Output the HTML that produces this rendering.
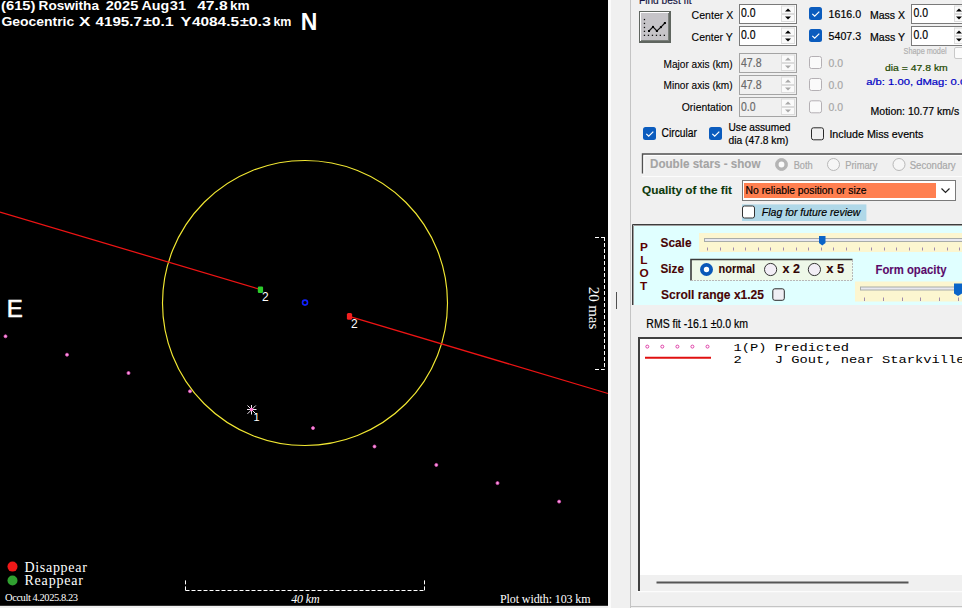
<!DOCTYPE html>
<html><head><meta charset="utf-8">
<style>
html,body{margin:0;padding:0;width:962px;height:608px;overflow:hidden;background:#f0f0f0;}
svg{display:block;position:absolute;left:0;top:0;}
text{font-family:"Liberation Sans",sans-serif;}
.sf{font-family:"Liberation Serif",serif;}
.mono{font-family:"Liberation Mono",monospace;}
</style></head>
<body>
<svg width="962" height="608" viewBox="0 0 962 608">
<!-- right panel background -->
<rect x="0" y="0" width="962" height="608" fill="#f0f0f0"/>
<!-- ================= BLACK PLOT PANEL ================= -->
<rect x="0" y="0" width="608" height="605.8" fill="#000"/>
<!-- header text -->
<g font-size="13" font-weight="bold" fill="#fff">
<text x="1.0" y="9.9" textLength="34.5" lengthAdjust="spacingAndGlyphs">(615)</text>
<text x="38.6" y="9.9" textLength="60.4" lengthAdjust="spacingAndGlyphs">Roswitha</text>
<text x="105.7" y="9.9" textLength="32.6" lengthAdjust="spacingAndGlyphs">2025</text>
<text x="141.5" y="9.9" textLength="27.7" lengthAdjust="spacingAndGlyphs">Aug</text>
<text x="169.8" y="9.9" textLength="16.2" lengthAdjust="spacingAndGlyphs">31</text>
<text x="197.20000000000002" y="9.9" textLength="30.4" lengthAdjust="spacingAndGlyphs">47.8</text>
<text x="229.9" y="9.9" textLength="19.7" lengthAdjust="spacingAndGlyphs">km</text>
<text x="1.4" y="25.7" textLength="72.8" lengthAdjust="spacingAndGlyphs">Geocentric</text>
<text x="79.10000000000001" y="25.7" textLength="11.4" lengthAdjust="spacingAndGlyphs">X</text>
<text x="95.60000000000001" y="25.7" textLength="46.2" lengthAdjust="spacingAndGlyphs">4195.7</text>
<text x="143.3" y="25.7" textLength="30.3" lengthAdjust="spacingAndGlyphs">±0.1</text>
<text x="180.4" y="25.7" textLength="10.9" lengthAdjust="spacingAndGlyphs">Y</text>
<text x="191.9" y="25.7" textLength="47.1" lengthAdjust="spacingAndGlyphs">4084.5</text>
<text x="239.9" y="25.7" textLength="31.0" lengthAdjust="spacingAndGlyphs">±0.3</text>
<text x="273.4" y="25.7" textLength="18.0" lengthAdjust="spacingAndGlyphs">km</text>
</g>
<text x="300.7" y="29.7" font-size="23" font-weight="bold" fill="#fff">N</text>
<text x="6.8" y="317.1" font-size="24" fill="#fff" stroke="#fff" stroke-width="0.6">E</text>

<!-- circle -->
<circle cx="305" cy="303" r="142.5" fill="none" stroke="#f2e832" stroke-width="1.15"/>
<!-- chord lines -->
<line x1="0" y1="212" x2="260.5" y2="289.5" stroke="#ee1414" stroke-width="1.25"/>
<line x1="349.2" y1="316.3" x2="608" y2="393.5" stroke="#ee1414" stroke-width="1.25"/>
<!-- markers -->
<rect x="257.8" y="286.6" width="5.3" height="6.4" rx="1.2" fill="#2ccc2c"/>
<rect x="346.9" y="313" width="5.2" height="6.8" rx="1.5" fill="#f22020"/>
<circle cx="305" cy="302.6" r="2.5" fill="none" stroke="#1020ff" stroke-width="1.6"/>
<text x="262" y="301" font-size="12" fill="#fff">2</text>
<text x="351" y="328" font-size="12" fill="#fff">2</text>
<!-- predicted track dots -->
<g fill="#f8a0e0" stroke="#e850c0" stroke-width="0.8">
<circle cx="5.5" cy="336.3" r="1.5"/>
<circle cx="67" cy="354.7" r="1.5"/>
<circle cx="128.5" cy="373" r="1.5"/>
<circle cx="190" cy="391.3" r="1.5"/>
<circle cx="313" cy="428.1" r="1.5"/>
<circle cx="374.5" cy="446.5" r="1.5"/>
<circle cx="436.3" cy="464.9" r="1.5"/>
<circle cx="497.5" cy="483.1" r="1.5"/>
<circle cx="559.1" cy="501.6" r="1.5"/>
</g>
<!-- star -->
<g stroke="#f4eaf4" stroke-width="1">
<line x1="247" y1="409.5" x2="256.5" y2="409.5"/>
<line x1="251.5" y1="405" x2="251.5" y2="414.5"/>
<line x1="247.5" y1="405.5" x2="255.8" y2="413.8"/>
<line x1="255.8" y1="405.5" x2="247.5" y2="413.8"/>
</g>
<circle cx="251.5" cy="409.5" r="1.7" fill="#ff70d0"/>
<text x="253.5" y="420.6" font-size="11" fill="#fff">1</text>

<!-- vertical scale bracket -->
<g stroke="#fff" stroke-width="1" fill="none" stroke-dasharray="4,2">
<line x1="604.5" y1="237" x2="604.5" y2="369.5"/>
<line x1="595" y1="237.5" x2="604.5" y2="237.5"/>
<line x1="595" y1="369.5" x2="604.5" y2="369.5"/>
</g>
<text class="sf" transform="translate(588.6,286.8) rotate(90)" font-size="15" fill="#fff" textLength="42.5" lengthAdjust="spacing">20 mas</text>

<!-- horizontal scale bracket -->
<g stroke="#fff" stroke-width="1" fill="none" stroke-dasharray="4,2">
<line x1="185.5" y1="590.5" x2="424.5" y2="590.5"/>
<line x1="185.5" y1="580.4" x2="185.5" y2="590.5"/>
<line x1="424.5" y1="580.4" x2="424.5" y2="590.5"/>
</g>
<text class="sf" x="291.2" y="603.1" font-size="12" font-style="italic" fill="#fff" textLength="28.4" lengthAdjust="spacing">40 km</text>

<!-- legend -->
<circle cx="12.5" cy="566.6" r="5" fill="#f01818"/>
<circle cx="12.5" cy="580.5" r="5" fill="#30a030"/>
<text class="sf" x="24.4" y="571.6" font-size="14" fill="#fff" textLength="62.4" lengthAdjust="spacing">Disappear</text>
<text class="sf" x="24.4" y="585.4" font-size="14" fill="#fff" textLength="58.6" lengthAdjust="spacing">Reappear</text>
<text class="sf" x="5" y="601.4" font-size="10.5" fill="#fff" textLength="73" lengthAdjust="spacing">Occult 4.2025.8.23</text>
<text class="sf" x="500" y="603" font-size="12" fill="#fff" textLength="90.6" lengthAdjust="spacing">Plot width: 103 km</text>


<!-- ================= RIGHT PANEL ================= -->
<rect x="608" y="0" width="3" height="608" fill="#fbfbfb"/>
<line x1="630.5" y1="0" x2="630.5" y2="608" stroke="#c4c4c4" stroke-width="1"/>
<text x="639" y="4" font-size="11.5" fill="#121238" textLength="52.5" lengthAdjust="spacingAndGlyphs" stroke="#1a1a50" stroke-width="0.2">Find best fit</text>
<!-- find best fit button -->
<rect x="639" y="11" width="32" height="32" fill="#5f655f"/>
<rect x="640" y="12" width="29" height="29" fill="#fdfdfd"/>
<rect x="641" y="13" width="28" height="28" fill="#7a7f7a"/>
<rect x="641" y="13" width="27" height="27" fill="#c6c4c8"/>
<g fill="#111">
<rect x="643.8" y="18.9" width="1.3" height="1.3"/><rect x="643.8" y="22.8" width="1.3" height="1.3"/><rect x="643.8" y="26.8" width="1.3" height="1.3"/><rect x="643.8" y="30.7" width="1.3" height="1.3"/><rect x="643.8" y="34.7" width="1.3" height="1.3"/>
<rect x="647.8" y="34.7" width="1.3" height="1.3"/><rect x="651.8" y="34.7" width="1.3" height="1.3"/><rect x="655.8" y="34.7" width="1.3" height="1.3"/><rect x="659.7" y="34.7" width="1.3" height="1.3"/><rect x="663.7" y="34.7" width="1.3" height="1.3"/>
</g>
<polyline points="649,31 653,26.9 656.9,31 660.9,27.1 664.9,23" fill="none" stroke="#111" stroke-width="1.2"/>
<g fill="#000"><rect x="648" y="30" width="2" height="2"/><rect x="652" y="25.9" width="2" height="2"/><rect x="655.9" y="30" width="2" height="2"/><rect x="659.9" y="26.1" width="2" height="2"/><rect x="663.9" y="22" width="2" height="2"/></g>

<!-- labels -->
<g font-size="11.4" fill="#000" stroke="#000" stroke-width="0.12">
<text x="691.6" y="18.7" textLength="41.7" lengthAdjust="spacingAndGlyphs">Center X</text>
<text x="691.6" y="40.7" textLength="41.2" lengthAdjust="spacingAndGlyphs">Center Y</text>
<text x="663.5" y="67.5" textLength="69.1" lengthAdjust="spacingAndGlyphs">Major axis (km)</text>
<text x="663.5" y="89.3" textLength="69.1" lengthAdjust="spacingAndGlyphs">Minor axis (km)</text>
<text x="681.8" y="110.7" textLength="50.8" lengthAdjust="spacingAndGlyphs">Orientation</text>
</g>
<!-- inputs -->
<g>
<rect x="739.5" y="4.5" width="57" height="19" fill="#fff" stroke="#7a7a7a"/>
<rect x="739.5" y="26.5" width="57" height="19" fill="#fff" stroke="#7a7a7a"/>
<rect x="739.5" y="53.5" width="57" height="19" fill="none" stroke="#a4a4a4"/>
<rect x="739.5" y="75.5" width="57" height="19" fill="none" stroke="#a4a4a4"/>
<rect x="739.5" y="97.5" width="57" height="19" fill="none" stroke="#a4a4a4"/>
</g>
<g fill="#fafafa" stroke="#dcdcdc">
<rect x="781.5" y="6" width="13" height="7.5"/><rect x="781.5" y="14.5" width="13" height="7"/>
<rect x="781.5" y="28" width="13" height="7.5"/><rect x="781.5" y="36.5" width="13" height="7"/>
<rect x="781.5" y="55" width="13" height="7.5"/><rect x="781.5" y="63.5" width="13" height="7"/>
<rect x="781.5" y="77" width="13" height="7.5"/><rect x="781.5" y="85.5" width="13" height="7"/>
<rect x="781.5" y="99" width="13" height="7.5"/><rect x="781.5" y="107.5" width="13" height="7"/>
</g>
<g fill="#000">
<path d="M785 11.5h6l-3-3z"/><path d="M785 16.5h6l-3 3z"/>
<path d="M785 33.5h6l-3-3z"/><path d="M785 38.5h6l-3 3z"/>
</g>
<g fill="#a8a8a8">
<path d="M785 60.5h6l-3-3z"/><path d="M785 65.5h6l-3 3z"/>
<path d="M785 82.5h6l-3-3z"/><path d="M785 87.5h6l-3 3z"/>
<path d="M785 104.5h6l-3-3z"/><path d="M785 109.5h6l-3 3z"/>
</g>
<g font-size="12">
<text x="741" y="16.8" fill="#000" textLength="14.5" lengthAdjust="spacingAndGlyphs" stroke="#000" stroke-width="0.2">0.0</text>
<text x="741" y="38.8" fill="#000" textLength="14.5" lengthAdjust="spacingAndGlyphs" stroke="#000" stroke-width="0.2">0.0</text>
<text x="741" y="66.5" fill="#6a6a6a" textLength="20.5" lengthAdjust="spacingAndGlyphs" stroke="#6a6a6a" stroke-width="0.2">47.8</text>
<text x="741" y="88.5" fill="#6a6a6a" textLength="20.5" lengthAdjust="spacingAndGlyphs" stroke="#6a6a6a" stroke-width="0.2">47.8</text>
<text x="741" y="110.5" fill="#6a6a6a" textLength="14.5" lengthAdjust="spacingAndGlyphs" stroke="#6a6a6a" stroke-width="0.2">0.0</text>
</g>
<!-- checked checkboxes -->
<g fill="#0b5cbe">
<rect x="809" y="7" width="13" height="13" rx="2.5"/>
<rect x="809" y="29" width="13" height="13" rx="2.5"/>
<rect x="643" y="127" width="13" height="13" rx="2.5"/>
<rect x="709" y="127" width="13" height="13" rx="2.5"/>
</g>
<g fill="none" stroke="#fff" stroke-width="1.2">
<path d="M812.3 13.8l2.4 2.4 4.6-4.6"/>
<path d="M812.3 35.8l2.4 2.4 4.6-4.6"/>
<path d="M646.3 133.8l2.4 2.4 4.6-4.6"/>
<path d="M712.3 133.8l2.4 2.4 4.6-4.6"/>
</g>
<!-- disabled checkboxes -->
<g fill="#fafafa" stroke="#b4b0b4">
<rect x="809.5" y="56.5" width="12" height="12" rx="2"/>
<rect x="809.5" y="78.5" width="12" height="12" rx="2"/>
<rect x="809.5" y="100.8" width="12" height="12" rx="2"/>
</g>
<g font-size="11.5">
<text x="828.6" y="17.8" fill="#000" textLength="32.5" lengthAdjust="spacingAndGlyphs" stroke="#000" stroke-width="0.2">1616.0</text>
<text x="828.6" y="39.5" fill="#000" textLength="32.5" lengthAdjust="spacingAndGlyphs" stroke="#000" stroke-width="0.2">5407.3</text>
<text x="828.5" y="66.8" fill="#a8a8a8" textLength="14.5" lengthAdjust="spacingAndGlyphs" stroke="#a0a0a0" stroke-width="0.2">0.0</text>
<text x="828.5" y="88.8" fill="#a8a8a8" textLength="14.5" lengthAdjust="spacingAndGlyphs" stroke="#a0a0a0" stroke-width="0.2">0.0</text>
<text x="828.5" y="111" fill="#a8a8a8" textLength="14.5" lengthAdjust="spacingAndGlyphs" stroke="#a0a0a0" stroke-width="0.2">0.0</text>
</g>
<g font-size="10.5" fill="#000" stroke="#000" stroke-width="0.2">
<text x="870" y="18.6" textLength="35" lengthAdjust="spacingAndGlyphs">Mass X</text>
<text x="870" y="40.7" textLength="35" lengthAdjust="spacingAndGlyphs">Mass Y</text>
</g>
<rect x="911.5" y="4.5" width="60" height="19" fill="#fff" stroke="#7a7a7a"/>
<rect x="911.5" y="26.5" width="60" height="19" fill="#fff" stroke="#7a7a7a"/>
<text x="913.5" y="16.8" font-size="12" fill="#000" textLength="14.5" lengthAdjust="spacingAndGlyphs" stroke="#000" stroke-width="0.2">0.0</text>
<text x="913.5" y="39.3" font-size="12" fill="#000" textLength="14.5" lengthAdjust="spacingAndGlyphs" stroke="#000" stroke-width="0.2">0.0</text>
<g fill="#fafafa" stroke="#dcdcdc">
<rect x="954.5" y="6" width="13" height="7.5"/><rect x="954.5" y="14.5" width="13" height="7"/>
<rect x="954.5" y="28" width="13" height="7.5"/><rect x="954.5" y="36.5" width="13" height="7"/>
</g>
<g fill="#000"><path d="M956 11.5h6l-3-3z"/><path d="M956 16.5h6l-3 3z"/><path d="M956 33.5h6l-3-3z"/><path d="M956 38.5h6l-3 3z"/></g>
<text x="903.6" y="54" font-size="9" fill="#b0b0b0" textLength="43" lengthAdjust="spacingAndGlyphs" stroke="#b0b0b0" stroke-width="0.2">Shape model</text>
<rect x="954.5" y="47.5" width="12" height="11" rx="1.5" fill="#fbfbfb" stroke="#c8c8c8"/>
<text x="885" y="70.7" font-size="9.8" fill="#1c4800" textLength="62.8" lengthAdjust="spacingAndGlyphs" stroke="#1c4800" stroke-width="0.2">dia = 47.8 km</text>
<text x="866.2" y="84.5" font-size="9.8" fill="#0000c4" textLength="100" lengthAdjust="spacingAndGlyphs" stroke="#0000c4" stroke-width="0.2">a/b: 1.00, dMag: 0.0</text>
<text x="870.6" y="114.7" font-size="10.6" fill="#000" textLength="88.6" lengthAdjust="spacingAndGlyphs" stroke="#000" stroke-width="0.2">Motion: 10.77 km/s</text>

<!-- checkbox row -->
<text x="661.6" y="137.3" font-size="12" fill="#000" textLength="35.4" lengthAdjust="spacingAndGlyphs" stroke="#000" stroke-width="0.2">Circular</text>
<text x="728.5" y="130.6" font-size="11" fill="#000" textLength="62" lengthAdjust="spacingAndGlyphs" stroke="#000" stroke-width="0.2">Use assumed</text>
<text x="728.5" y="143.8" font-size="11" fill="#000" textLength="60" lengthAdjust="spacingAndGlyphs" stroke="#000" stroke-width="0.2">dia (47.8 km)</text>
<rect x="811.5" y="127.8" width="12" height="12" rx="2" fill="none" stroke="#2a2a2a"/>
<text x="829.4" y="137.8" font-size="11.8" fill="#000" textLength="94" lengthAdjust="spacingAndGlyphs" stroke="#000" stroke-width="0.2">Include Miss events</text>


<!-- double stars group -->
<path d="M642.5 173.5V154H962" fill="none" stroke="#505050" stroke-width="1.4"/>
<path d="M644 173.5V155.5H962" fill="none" stroke="#fff" stroke-width="1"/>
<line x1="642" y1="176.5" x2="962" y2="176.5" stroke="#fcfcfc" stroke-width="1"/>
<text x="650" y="168.2" font-size="12" font-weight="bold" fill="#a4a4a4" textLength="110.5" lengthAdjust="spacingAndGlyphs" stroke="#a4a4a4" stroke-width="0.1">Double stars - show</text>
<g fill="#f6f6f6" stroke="#b8b8b8">
<circle cx="781.5" cy="164.5" r="6"/>
<circle cx="833.5" cy="164.5" r="6"/>
<circle cx="899" cy="164.5" r="6"/>
</g>
<circle cx="781.5" cy="164.5" r="4.4" fill="#fafafa" stroke="#b4b4b4" stroke-width="3"/>
<g font-size="11" fill="#a8a8a8" stroke="#a8a8a8" stroke-width="0.2">
<text x="793.7" y="169" textLength="19" lengthAdjust="spacingAndGlyphs">Both</text>
<text x="845.3" y="169" textLength="32" lengthAdjust="spacingAndGlyphs">Primary</text>
<text x="909.7" y="169" textLength="46" lengthAdjust="spacingAndGlyphs">Secondary</text>
</g>
<!-- quality -->
<text x="642" y="194.4" font-size="11.2" font-weight="bold" fill="#0c3a0c" textLength="90" lengthAdjust="spacingAndGlyphs" stroke="#0c3a0c" stroke-width="0.1">Quality of the fit</text>
<rect x="742.5" y="180.5" width="213" height="20" fill="#fff" stroke="#7a7a7a"/>
<rect x="744" y="183" width="192" height="15" fill="#ff7f50"/>
<text x="745.6" y="194.4" font-size="11.6" fill="#000" textLength="121" lengthAdjust="spacingAndGlyphs" stroke="#000" stroke-width="0.2">No reliable position or size</text>
<path d="M941.5 188.5l4 4 4-4" fill="none" stroke="#222" stroke-width="1.2"/>
<!-- flag -->
<rect x="742" y="204.4" width="124.4" height="16.6" fill="#b0d8e8"/>
<rect x="742.5" y="206" width="12" height="12" rx="2" fill="#fff" stroke="#333"/>
<text x="761.8" y="215.6" font-size="11.2" font-style="italic" fill="#000" textLength="98.6" lengthAdjust="spacingAndGlyphs" stroke="#000" stroke-width="0.2">Flag for future review</text>

<!-- PLOT panel -->
<rect x="632" y="224" width="330" height="81" fill="#e0ffff"/>
<path d="M632.5 305V224.5H962" fill="none" stroke="#3c3c3c" stroke-width="1"/>
<path d="M633.5 305V225.5H962" fill="none" stroke="#a0a0a0" stroke-width="1"/>
<g font-size="11.8" font-weight="bold" fill="#5c0000">
<text x="640" y="250.8">P</text>
<text x="640.3" y="263.8">L</text>
<text x="639.6" y="277.3">O</text>
<text x="640" y="289.8">T</text>
</g>
<g font-size="12" font-weight="bold" fill="#480404" stroke="#480404" stroke-width="0.1">
<text x="660.5" y="246.9" textLength="31" lengthAdjust="spacingAndGlyphs">Scale</text>
<text x="660.5" y="272.9" textLength="23.5" lengthAdjust="spacingAndGlyphs">Size</text>
<text x="661" y="299" textLength="103" lengthAdjust="spacingAndGlyphs">Scroll range x1.25</text>
</g>
<rect x="772.8" y="288.8" width="11.5" height="11.5" rx="2" fill="#f0eef4" stroke="#2a2a2a"/>
<!-- scale trackbar -->
<rect x="699" y="233" width="263" height="19" fill="#fcf6d0"/>
<rect x="704.5" y="238.5" width="258" height="3" fill="#e8e8f0" stroke="#a8aca8"/>
<path d="M819 236h6.5v7l-3.25 2.5-3.25-2.5z" fill="#0a64c8"/>
<g stroke="#a08cac" stroke-width="1">
<path d="M707.5 247.5v3M720.5 247.5v3M733.5 247.5v3M745.5 247.5v3M758.5 247.5v3M770.5 247.5v3M783.5 247.5v3M796.5 247.5v3M808.5 247.5v3M821.5 247.5v3M833.5 247.5v3M846.5 247.5v3M859.5 247.5v3M871.5 247.5v3M884.5 247.5v3M896.5 247.5v3M909.5 247.5v3M922.5 247.5v3M934.5 247.5v3M947.5 247.5v3M959.5 247.5v3"/>
</g>
<!-- size group -->
<rect x="690.5" y="259" width="162" height="21.5" fill="#eef8e8"/>
<path d="M691 280.5V259.5H852.5" fill="none" stroke="#3a3a3a" stroke-width="1.6"/>
<path d="M691 280.5H852.5V259.5" fill="none" stroke="#b8b8b8" stroke-width="1" stroke-dasharray="2,1"/>
<circle cx="706.5" cy="269.5" r="4.6" fill="#fff" stroke="#0a58b8" stroke-width="3.8"/>
<circle cx="770.6" cy="269.5" r="6.1" fill="#f2eef6" stroke="#333" stroke-width="1"/>
<circle cx="814.4" cy="269.5" r="6.1" fill="#f2eef6" stroke="#333" stroke-width="1"/>
<g font-size="12" font-weight="bold" fill="#300404" stroke="#300404" stroke-width="0.1">
<text x="718.6" y="273.3" textLength="36.5" lengthAdjust="spacingAndGlyphs">normal</text>
<text x="782.6" y="273.3" textLength="17.4" lengthAdjust="spacingAndGlyphs">x 2</text>
<text x="826.2" y="273.3" textLength="17.9" lengthAdjust="spacingAndGlyphs">x 5</text>
</g>
<text x="875.5" y="273.9" font-size="12" font-weight="bold" fill="#5a0a6a" textLength="71" lengthAdjust="spacingAndGlyphs" stroke="#5a0a6a" stroke-width="0.1">Form opacity</text>
<!-- opacity trackbar -->
<rect x="855" y="281.5" width="107" height="20" fill="#fcf6d0"/>
<rect x="860.5" y="287" width="102" height="3" fill="#e8e8f0" stroke="#a8aca8"/>
<path d="M954 283.5h8v10l-4 2.5-4-2.5z" fill="#0a64c8"/>
<g stroke="#a08cac" stroke-width="1">
<path d="M864.5 297.5v3.5M883.5 297.5v3.5M902.5 297.5v3.5M920.5 297.5v3.5M939.5 297.5v3.5M958.5 297.5v3.5"/>
</g>
<line x1="616.5" y1="292" x2="616.5" y2="309" stroke="#505050"/>

<!-- RMS -->
<text x="646.3" y="327.7" font-size="12" fill="#000" textLength="101.7" lengthAdjust="spacingAndGlyphs" stroke="#000" stroke-width="0.2">RMS fit -16.1 ±0.0 km</text>
<!-- list box -->
<rect x="638" y="337" width="324" height="254" fill="#fff"/>
<path d="M639 591V338H962" fill="none" stroke="#404040" stroke-width="2"/>
<rect x="640" y="575" width="322" height="16" fill="#f0f0f0"/>
<line x1="656.5" y1="582.5" x2="908.5" y2="582.5" stroke="#555" stroke-width="2"/>
<line x1="637" y1="591.7" x2="962" y2="591.7" stroke="#ffffff" stroke-width="1"/>
<line x1="630" y1="606.5" x2="962" y2="606.5" stroke="#c4c4c4" stroke-width="1"/>
<g fill="none" stroke="#e040a8" stroke-width="1">
<circle cx="647.3" cy="346.6" r="1.5"/><circle cx="662.3" cy="346.6" r="1.5"/><circle cx="677.4" cy="346.6" r="1.5"/><circle cx="692.4" cy="346.6" r="1.5"/><circle cx="707.5" cy="346.6" r="1.5"/>
</g>
<line x1="645" y1="357.7" x2="711" y2="357.7" stroke="#e01010" stroke-width="2"/>
<g font-size="11.8" fill="#000">
<text x="733.5" y="350.7" xml:space="preserve" class="mono" textLength="115.5" lengthAdjust="spacingAndGlyphs">1(P) Predicted</text>
<text x="733.5" y="362.7" xml:space="preserve" class="mono" textLength="231" lengthAdjust="spacingAndGlyphs">2    J Gout, near Starkville</text>
</g>

</svg>
</body></html>
